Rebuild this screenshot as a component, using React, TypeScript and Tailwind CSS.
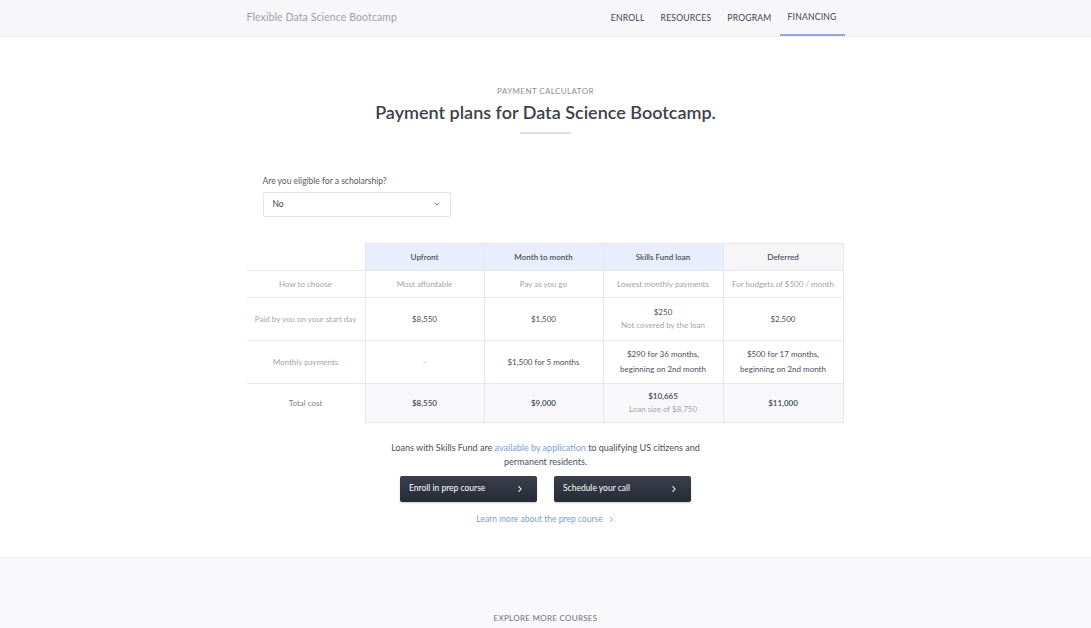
import React from "react";

const F = { fontFamily: "Lato, 'Open Sans', sans-serif" };

function Chevron({ className = "" }: { className?: string }) {
  return (
    <svg viewBox="0 0 10 10" className={className} fill="none" stroke="currentColor" strokeWidth="1.3" strokeLinecap="round" strokeLinejoin="round">
      <path d="M3.5 2 L6.5 5 L3.5 8" />
    </svg>
  );
}

export default function App() {
  const cols = ["Upfront", "Month to month", "Skills Fund loan", "Deferred"];
  return (
    <div className="min-h-screen bg-white text-[#4a4f5a]" style={F}>
      {/* header */}
      <header className="h-[37px] bg-[#f7f7f9] border-b border-[#eeeef2]">
        <div className="mx-auto w-[598px] h-full flex items-center justify-between">
          <div className="text-[10.5px] text-[#a0a2a8] tracking-[0.1px]">Flexible Data Science Bootcamp</div>
          <nav className="flex h-full text-[8.6px] text-[#3f4450] tracking-[0.2px]">
            <a className="flex items-center px-[8px] h-full">ENROLL</a>
            <a className="flex items-center px-[8px] h-full">RESOURCES</a>
            <a className="flex items-center px-[8px] h-full">PROGRAM</a>
            <a className="flex items-center px-[8px] h-full border-b-2 border-[#8ea8e0]">FINANCING</a>
          </nav>
        </div>
      </header>

      <section className="pt-[48px] pb-[31px]">
        <div className="mx-auto w-[598px] flex flex-col items-center">
          <div className="text-[8px] text-[#8d9099] tracking-[0.4px]">PAYMENT CALCULATOR</div>
          <h1 className="mt-[3px] text-[18px] font-semibold text-[#3c414c] leading-[24px]">Payment plans for Data Science Bootcamp.</h1>
          <div className="mt-[8px] w-[51px] h-[2px] bg-[#dedfe3]" />

          <div className="self-start ml-[16px] mt-[41px]">
            <div className="text-[8.5px] text-[#555a64]">Are you eligible for a scholarship?</div>
            <div className="mt-[4px] w-[188px] h-[25px] border border-[#e3e4e8] rounded-[2px] flex items-center justify-between px-[9px] text-[8.5px] text-[#444954]">
              <span>No</span>
              <svg viewBox="0 0 10 10" className="w-[8px] h-[8px] text-[#777b84]" fill="none" stroke="currentColor" strokeWidth="1.2" strokeLinecap="round"><path d="M2.5 3.8 L5 6.2 L7.5 3.8" /></svg>
            </div>
          </div>

          {/* table */}
          <div className="mt-[26px] w-full grid grid-cols-[118px_120px_119px_120px_120px] text-[8px]">
            {/* header row */}
            <div />
            {cols.map((c, i) => (
              <div
                key={c}
                className={`h-[27px] flex items-center justify-center font-semibold text-[#4a4f5a] border-t border-r border-[#e6e7ec] ${i === 0 ? "border-l" : ""} ${i < 3 ? "bg-[#e9eefc]" : "bg-[#f6f6f8]"}`}
              >
                {c}
              </div>
            ))}

            {/* how to choose */}
            <div className="h-[27px] flex items-center justify-center text-[#a2a5ad] border-t border-[#e6e7ec]">How to choose</div>
            {["Most affordable", "Pay as you go", "Lowest monthly payments", "For budgets of $500 / month"].map((t, i) => (
              <div key={t} className={`h-[27px] flex items-center justify-center text-[#a2a5ad] border-t border-r border-[#e6e7ec] ${i === 0 ? "border-l" : ""}`}>{t}</div>
            ))}

            {/* paid */}
            <div className="h-[43px] flex items-center justify-center text-[#a2a5ad] border-t border-[#e6e7ec]">Paid by you on your start day</div>
            <div className="h-[43px] flex items-center justify-center text-[#4a4f5a] border-t border-r border-l border-[#e6e7ec]">$8,550</div>
            <div className="h-[43px] flex items-center justify-center text-[#4a4f5a] border-t border-r border-[#e6e7ec]">$1,500</div>
            <div className="h-[43px] flex flex-col items-center justify-center border-t border-r border-[#e6e7ec] leading-[13px]">
              <span className="text-[#4a4f5a]">$250</span>
              <span className="text-[#a2a5ad]">Not covered by the loan</span>
            </div>
            <div className="h-[43px] flex items-center justify-center text-[#4a4f5a] border-t border-r border-[#e6e7ec]">$2,500</div>

            {/* monthly */}
            <div className="h-[43px] flex items-center justify-center text-[#a2a5ad] border-t border-[#e6e7ec]">Monthly payments</div>
            <div className="h-[43px] flex items-center justify-center text-[#a2a5ad] border-t border-r border-l border-[#e6e7ec]">-</div>
            <div className="h-[43px] flex items-center justify-center text-[#4a4f5a] border-t border-r border-[#e6e7ec]">$1,500 for 5 months</div>
            <div className="h-[43px] flex flex-col items-center justify-center text-[#4a4f5a] border-t border-r border-[#e6e7ec] leading-[15px]">
              <span>$290 for 36 months,</span>
              <span>beginning on 2nd month</span>
            </div>
            <div className="h-[43px] flex flex-col items-center justify-center text-[#4a4f5a] border-t border-r border-[#e6e7ec] leading-[15px]">
              <span>$500 for 17 months,</span>
              <span>beginning on 2nd month</span>
            </div>

            {/* total */}
            <div className="h-[40px] flex items-center justify-center text-[#7d818a] border-t border-[#e6e7ec]">Total cost</div>
            <div className="h-[40px] flex items-center justify-center font-semibold text-[#444954] bg-[#f8f8fb] border-t border-r border-l border-b border-[#e6e7ec]">$8,550</div>
            <div className="h-[40px] flex items-center justify-center font-semibold text-[#444954] bg-[#f8f8fb] border-t border-r border-b border-[#e6e7ec]">$9,000</div>
            <div className="h-[40px] flex flex-col items-center justify-center bg-[#f8f8fb] border-t border-r border-b border-[#e6e7ec] leading-[13px]">
              <span className="font-semibold text-[#444954]">$10,665</span>
              <span className="text-[#a2a5ad]">Loan size of $8,750</span>
            </div>
            <div className="h-[40px] flex items-center justify-center font-semibold text-[#444954] bg-[#f8f8fb] border-t border-r border-b border-[#e6e7ec]">$11,000</div>
          </div>

          <div className="mt-[18px] text-center text-[9px] leading-[14px] text-[#4a4f5a] w-[330px]">
            Loans with Skills Fund are <span className="text-[#7b9ed6]">available by application</span> to qualifying US citizens and permanent residents.
          </div>

          <div className="mt-[7px] flex gap-[17px]">
            <button className="w-[137px] h-[26px] rounded-[2px] bg-gradient-to-b from-[#3a3f4c] to-[#272b36] text-white text-[8.5px] flex items-center justify-between pl-[9px] pr-[13px] shadow-[0_1px_2px_rgba(0,0,0,0.2)]">
              <span>Enroll in prep course</span>
              <Chevron className="w-[8px] h-[8px]" />
            </button>
            <button className="w-[137px] h-[26px] rounded-[2px] bg-gradient-to-b from-[#3a3f4c] to-[#272b36] text-white text-[8.5px] flex items-center justify-between pl-[9px] pr-[13px] shadow-[0_1px_2px_rgba(0,0,0,0.2)]">
              <span>Schedule your call</span>
              <Chevron className="w-[8px] h-[8px]" />
            </button>
          </div>

          <div className="mt-[11px] flex items-center gap-[5px] text-[8.5px] text-[#7b9ed6]">
            <span>Learn more about the prep course</span>
            <Chevron className="w-[7px] h-[7px]" />
          </div>
        </div>
      </section>

      <section className="bg-[#f9f9fb] border-t border-[#f1f1f4] pt-[54px] pb-[40px]">
        <div className="text-center text-[8px] text-[#6d717a] tracking-[0.3px]">EXPLORE MORE COURSES</div>
      </section>
    </div>
  );
}
